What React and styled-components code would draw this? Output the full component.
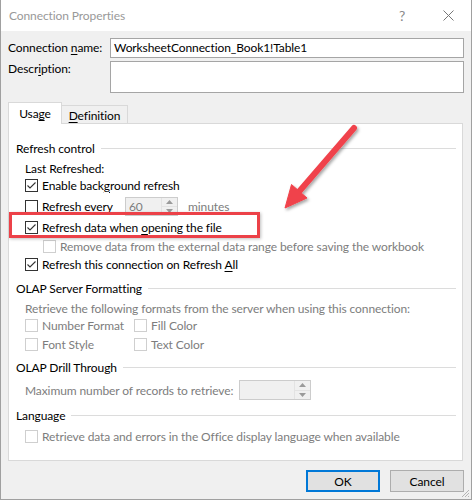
import React from 'react';
import styled, { createGlobalStyle } from 'styled-components';

const Global = createGlobalStyle`
  html, body { margin: 0; padding: 0; background: #ffffff; }
  body { font-family: Lato, "Noto Sans", sans-serif; font-size: 12px; }
  u { text-decoration: underline; text-decoration-thickness: 1px; text-underline-offset: 2px; }
`;

const FONT = `Lato, "Noto Sans", "Liberation Sans", sans-serif`;

const Dialog = styled.div`
  position: relative;
  width: 472px;
  height: 500px;
  box-sizing: border-box;
  background: #f0f0f0;
  border: 1px solid #a0a0a0;
  border-top: none;
  display: flex;
  flex-direction: column;
  font-family: ${FONT};
  font-size: 12px;
  letter-spacing: -0.1px;
  color: #000;
  overflow: hidden;
`;

const TitleBar = styled.div`
  height: 31px;
  flex: none;
  background: #ffffff;
  display: flex;
  align-items: center;
  padding-left: 8px;
  color: #999999;
  font-size: 12px;
`;

const TitleText = styled.div`
  flex: 1;
`;

const TitleButton = styled.div`
  width: 46px;
  height: 31px;
  display: flex;
  align-items: center;
  justify-content: center;
  color: #8a8a8a;
  font-size: 14px;
`;

const Form = styled.div`
  padding: 7px 7px 0 7px;
  display: flex;
  flex-direction: column;
`;

const FieldRow = styled.div`
  display: flex;
  align-items: ${p => (p.$top ? 'flex-start' : 'center')};
  margin-top: ${p => p.$mt || 0}px;
`;

const FieldLabel = styled.div`
  width: 102px;
  flex: none;
  line-height: 16px;
`;

const TextBox = styled.div`
  width: 354px;
  height: ${p => p.$h}px;
  box-sizing: border-box;
  border: 1px solid #a5a5a5;
  background: #fff;
  padding: 0 3px;
  line-height: ${p => p.$h - 2}px;
  white-space: nowrap;
`;

const TabStrip = styled.div`
  display: flex;
  align-items: flex-end;
  height: 22px;
  margin-top: 9px;
  padding-left: 7px;
`;

const Tab = styled.div`
  position: relative;
  z-index: ${p => (p.$active ? 2 : 1)};
  width: ${p => p.$w}px;
  height: ${p => (p.$active ? 22 : 18)}px;
  margin-bottom: ${p => (p.$active ? 0 : 1)}px;
  box-sizing: border-box;
  border: 1px solid #d9d9d9;
  border-bottom: none;
  border-left: ${p => (p.$noLeft ? 'none' : '1px solid #d9d9d9')};
  background: ${p => (p.$active ? '#ffffff' : '#f0f0f0')};
  display: flex;
  align-items: center;
  justify-content: center;
  padding-top: ${p => (p.$active ? 0 : 1)}px;
`;

const Panel = styled.div`
  position: relative;
  z-index: 1;
  margin: -1px 0 0 7px;
  width: 455px;
  height: 338px;
  box-sizing: border-box;
  background: #ffffff;
  border: 1px solid #d9d9d9;
  padding-top: 16px;
  display: flex;
  flex-direction: column;
`;

const SectionHead = styled.div`
  display: flex;
  align-items: center;
  gap: 6px;
  height: 16px;
  margin-top: ${p => p.$mt || 0}px;
  padding: 0 6px 0 7px;
  white-space: nowrap;
  &::after {
    content: '';
    flex: 1;
    height: 1px;
    background: #dcdcdc;
  }
`;

const Row = styled.div`
  display: flex;
  align-items: center;
  height: 16px;
  margin-top: ${p => p.$mt || 0}px;
  padding-left: ${p => p.$indent ?? 16}px;
  white-space: nowrap;
  color: ${p => (p.$disabled ? '#7d7d7d' : '#000')};
`;

const Item = styled.div`
  display: flex;
  align-items: center;
  gap: 4px;
  width: ${p => (p.$w ? `${p.$w}px` : 'auto')};
  flex: none;
  color: ${p => (p.$disabled ? '#7d7d7d' : '#000')};
`;

const Label = styled.span`
  white-space: nowrap;
`;

const Box = styled.span`
  width: 13px;
  height: 13px;
  box-sizing: border-box;
  border: 1px solid ${p => (p.$disabled ? '#cfcfcf' : '#333333')};
  background: #ffffff;
  flex: none;
  display: flex;
  align-items: center;
  justify-content: center;
`;

const FixedLabel = styled.span`
  width: ${p => p.$w}px;
  flex: none;
`;

const Spin = styled.div`
  width: ${p => p.$w}px;
  height: ${p => p.$h}px;
  box-sizing: border-box;
  border: 1px solid #cccccc;
  background: #f0f0f0;
  display: flex;
  flex: none;
  color: #7d7d7d;
`;

const SpinField = styled.div`
  flex: 1;
  padding-left: 3px;
  display: flex;
  align-items: center;
`;

const SpinButtons = styled.div`
  width: 15px;
  display: flex;
  flex-direction: column;
  border-left: 1px solid #e3e3e3;
`;

const SpinBtn = styled.div`
  flex: 1;
  display: flex;
  align-items: center;
  justify-content: center;
  & + & { border-top: 1px solid #e3e3e3; }
`;

const After = styled.span`
  margin-left: 10px;
  color: #7d7d7d;
`;

const Footer = styled.div`
  display: flex;
  justify-content: flex-end;
  gap: 10px;
  padding: 9px 7px 0 0;
`;

const Button = styled.div`
  width: 74px;
  height: 22px;
  box-sizing: border-box;
  background: #e1e1e1;
  border: ${p => (p.$default ? '2px solid #0078d7' : '1px solid #adadad')};
  display: flex;
  align-items: center;
  justify-content: center;
`;

const Highlight = styled.div`
  position: absolute;
  left: 8px;
  top: 212px;
  width: 251px;
  height: 26px;
  box-sizing: border-box;
  border: 3px solid #ec4148;
  box-shadow: 1px 1px 3px rgba(0, 0, 0, 0.25);
  z-index: 5;
  pointer-events: none;
`;

const Overlay = styled.svg`
  position: absolute;
  left: 0;
  top: 0;
  z-index: 6;
  pointer-events: none;
`;

const Grip = styled.svg`
  position: absolute;
  right: 1px;
  bottom: 1px;
`;

const Check = ({ checked, disabled }) => (
  <Box $disabled={disabled}>
    {checked && (
      <svg width="11" height="11" viewBox="0 0 11 11">
        <polyline points="1.5,5.5 4,8 9.5,2.5" fill="none" stroke="#333" strokeWidth="1.1" />
      </svg>
    )}
  </Box>
);

const Arrows = () => (
  <SpinButtons>
    <SpinBtn>
      <svg width="7" height="4" viewBox="0 0 7 4"><polygon points="0,4 3.5,0 7,4" fill="#9a9a9a" /></svg>
    </SpinBtn>
    <SpinBtn>
      <svg width="7" height="4" viewBox="0 0 7 4"><polygon points="0,0 3.5,4 7,0" fill="#9a9a9a" /></svg>
    </SpinBtn>
  </SpinButtons>
);

export default function App() {
  return (
    <>
      <Global />
      <Dialog>
        <TitleBar>
          <TitleText>Connection Properties</TitleText>
          <TitleButton>?</TitleButton>
          <TitleButton>
            <svg width="11" height="11" viewBox="0 0 11 11">
              <path d="M0.5 0.5 L10.5 10.5 M10.5 0.5 L0.5 10.5" stroke="#777" strokeWidth="1" />
            </svg>
          </TitleButton>
        </TitleBar>

        <Form>
          <FieldRow>
            <FieldLabel>Connection <u>n</u>ame:</FieldLabel>
            <TextBox $h={20}>WorksheetConnection_Book1!Table1</TextBox>
          </FieldRow>
          <FieldRow $top $mt={3}>
            <FieldLabel>Descr<u>i</u>ption:</FieldLabel>
            <TextBox $h={32} />
          </FieldRow>
        </Form>

        <TabStrip>
          <Tab $active $w={54}><Label>Usa<u>g</u>e</Label></Tab>
          <Tab $w={66} $noLeft><Label><u>D</u>efinition</Label></Tab>
        </TabStrip>

        <Panel>
          <SectionHead>Refresh control</SectionHead>
          <Row $mt={4}>Last Refreshed:</Row>
          <Row $mt={1}>
            <Item><Check checked /><Label>Enable back<u>g</u>round refresh</Label></Item>
          </Row>
          <Row $mt={5}>
            <Item>
              <Check />
              <FixedLabel $w={83}><u>R</u>efresh every</FixedLabel>
            </Item>
            <Spin $w={53} $h={19}>
              <SpinField>60</SpinField>
              <Arrows />
            </Spin>
            <After>minutes</After>
          </Row>
          <Row $mt={5}>
            <Item><Check checked /><Label>Refresh data when <u>o</u>pening the file</Label></Item>
          </Row>
          <Row $mt={3} $indent={34}>
            <Item $disabled><Check disabled /><Label>Remove data from the external data range before saving the workbook</Label></Item>
          </Row>
          <Row $mt={2}>
            <Item><Check checked /><Label>Refresh this connection on Refresh <u>A</u>ll</Label></Item>
          </Row>

          <SectionHead $mt={8}>OLAP Server Formatting</SectionHead>
          <Row $mt={4} $disabled>Retrieve the following formats from the server when using this connection:</Row>
          <Row $mt={1}>
            <Item $w={109} $disabled><Check disabled /><Label>Number Format</Label></Item>
            <Item $disabled><Check disabled /><Label>Fill Color</Label></Item>
          </Row>
          <Row $mt={3}>
            <Item $w={109} $disabled><Check disabled /><Label>Font Style</Label></Item>
            <Item $disabled><Check disabled /><Label>Text Color</Label></Item>
          </Row>

          <SectionHead $mt={7}>OLAP Drill Through</SectionHead>
          <Row $mt={7} $disabled>
            <FixedLabel $w={214}>Maximum number of records to retrieve:</FixedLabel>
            <Spin $w={72} $h={20}>
              <SpinField />
              <Arrows />
            </Spin>
          </Row>

          <SectionHead $mt={9}>Language</SectionHead>
          <Row $mt={5}>
            <Item $disabled><Check disabled /><Label>Retrieve data and errors in the Office display language when available</Label></Item>
          </Row>
        </Panel>

        <Footer>
          <Button $default>OK</Button>
          <Button>Cancel</Button>
        </Footer>

        <Highlight />
        <Overlay width="472" height="500" viewBox="0 0 472 500">
          <defs>
            <filter id="sh" x="-20%" y="-20%" width="140%" height="140%">
              <feDropShadow dx="1.5" dy="2" stdDeviation="1.5" floodColor="#000" floodOpacity="0.35" />
            </filter>
          </defs>
          <g filter="url(#sh)" fill="#f0434b" stroke="#f0434b">
            <line x1="353" y1="128" x2="296" y2="194" strokeWidth="6" strokeLinecap="round" />
            <polygon points="284,208 290.5,184.5 306,198" strokeWidth="1" strokeLinejoin="round" />
          </g>
        </Overlay>
        <Grip width="10" height="10" viewBox="0 0 10 10">
          <path d="M9 2 L2 9 M9 5 L5 9 M9 8 L8 9" stroke="#b5b5b5" strokeWidth="1" />
        </Grip>
      </Dialog>
    </>
  );
}
